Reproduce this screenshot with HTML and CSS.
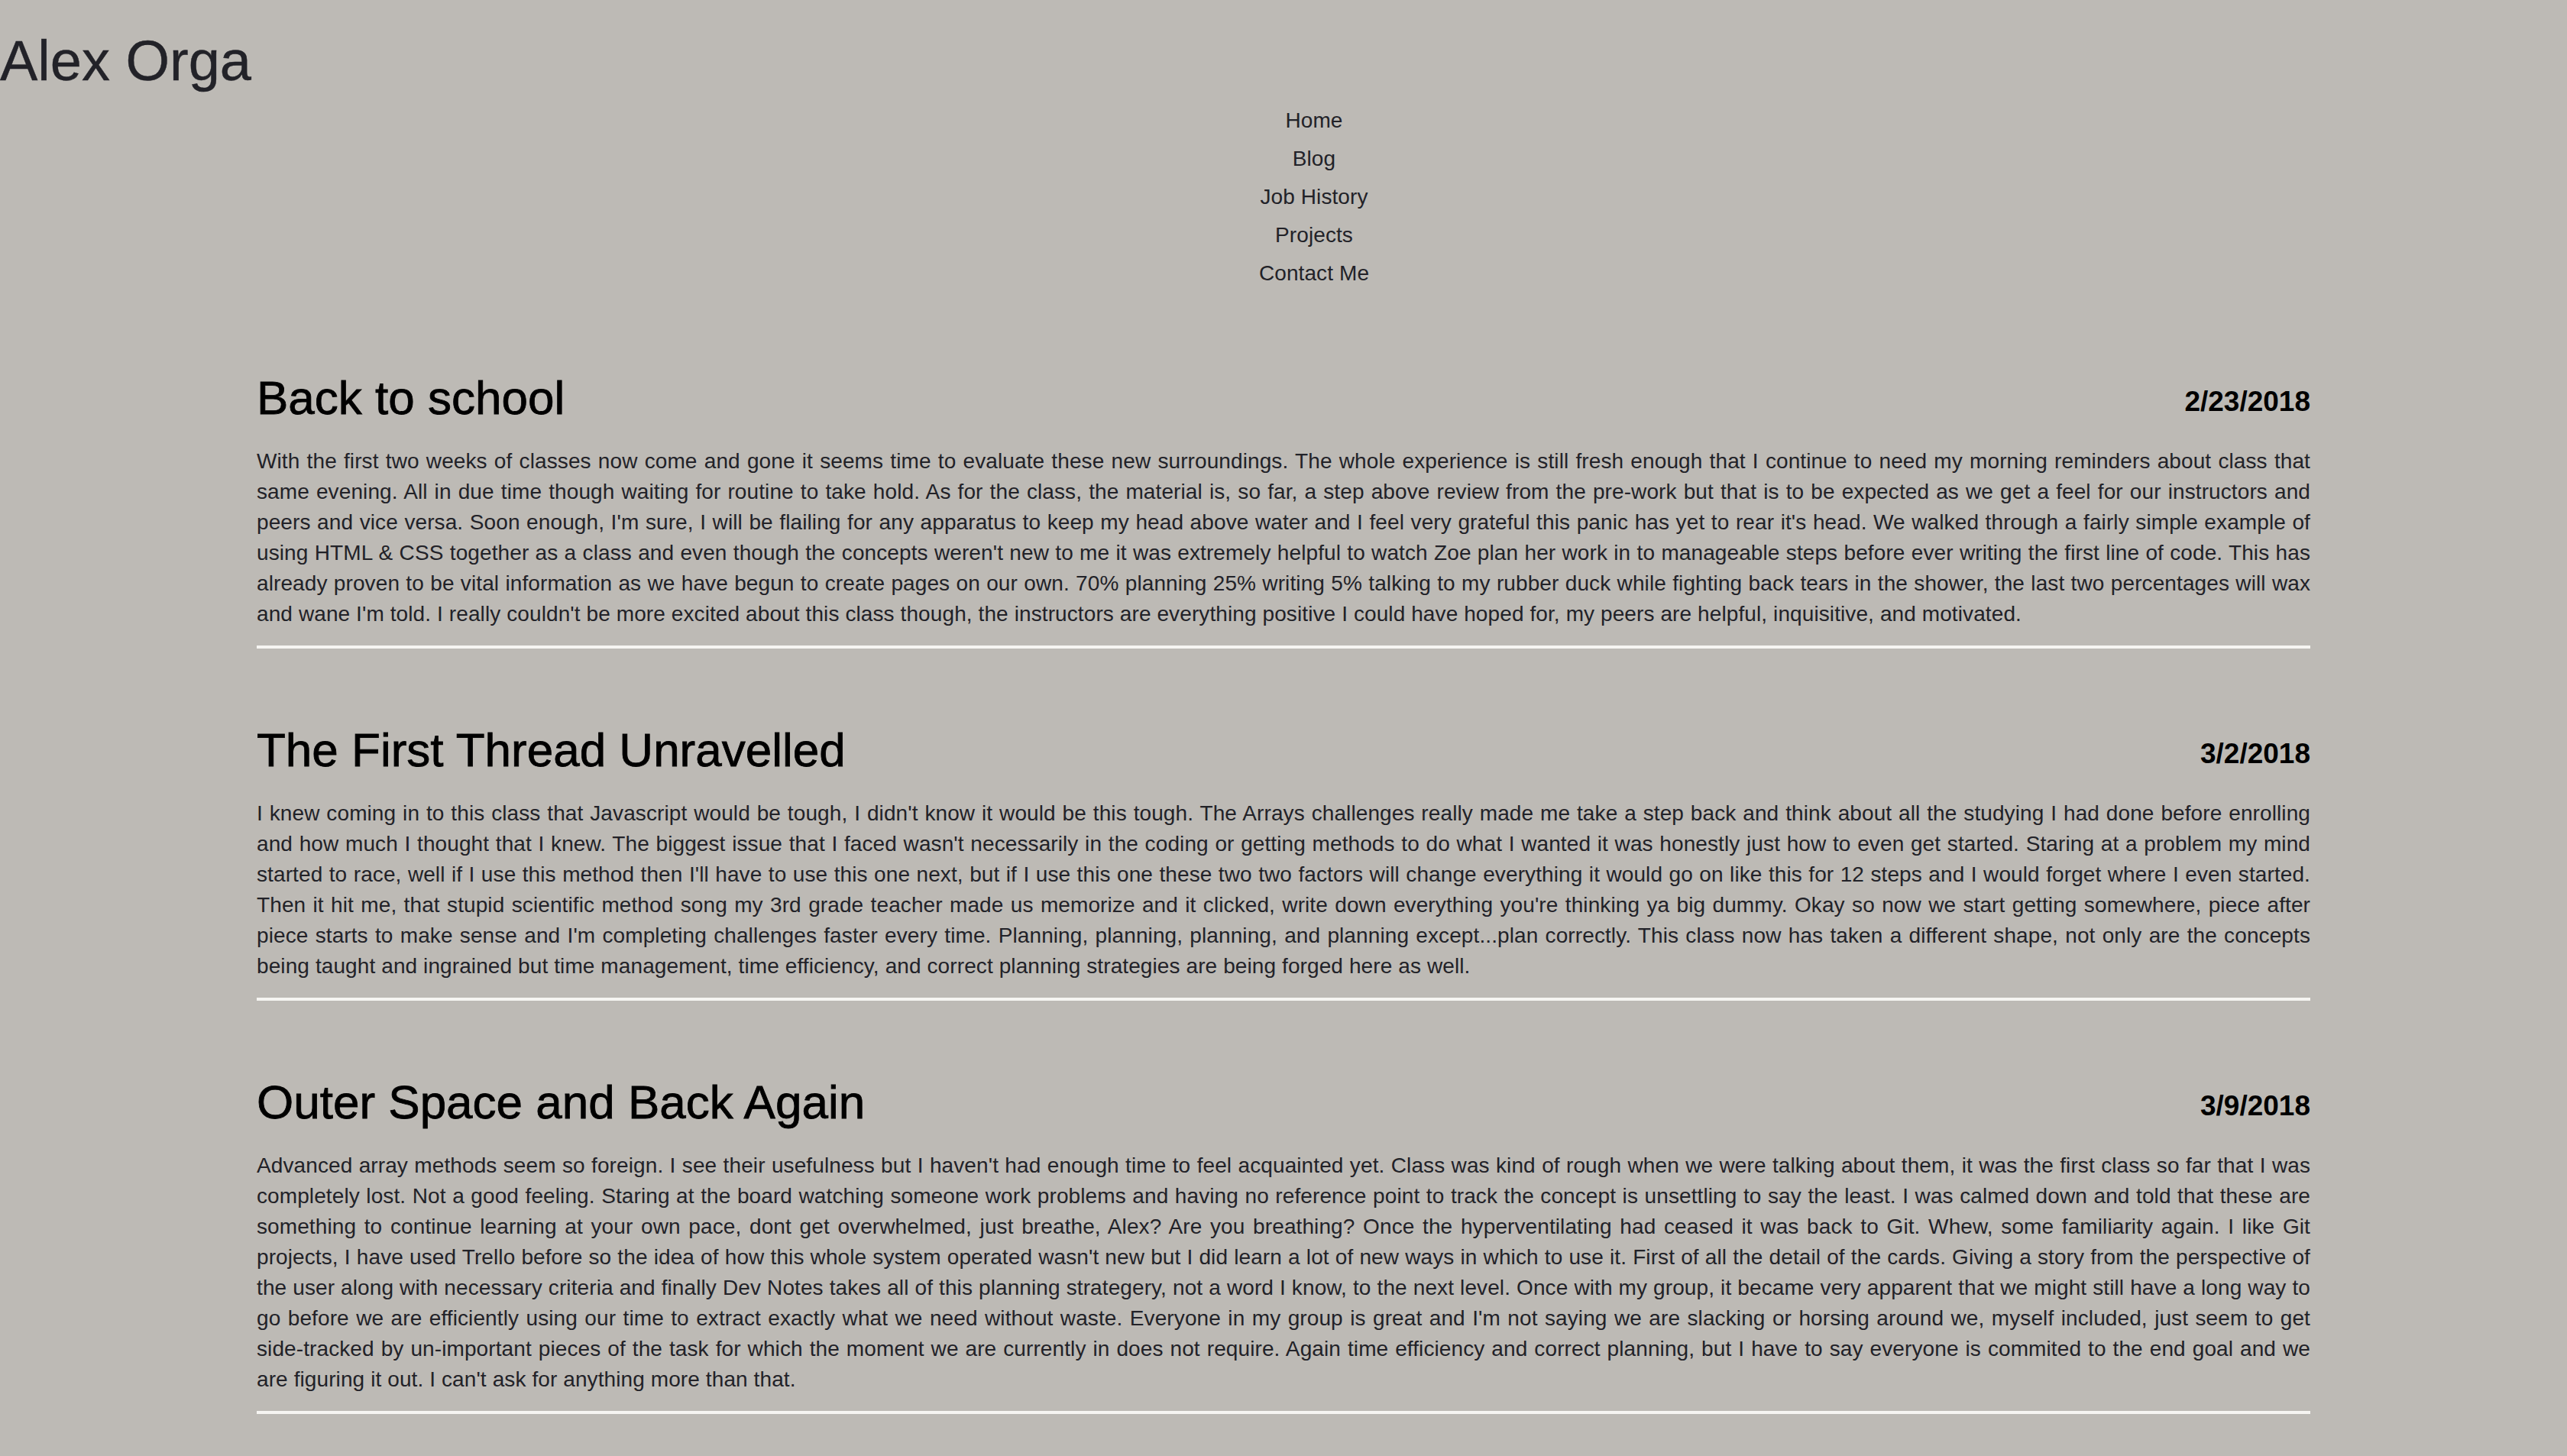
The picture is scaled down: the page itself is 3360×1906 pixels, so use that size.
FILE: index.html
```html
<!DOCTYPE html>
<html lang="en">
<head>
<meta charset="utf-8">
<title>Alex Orga</title>
<link rel="stylesheet" href="styles.css">
</head>
<body>
<header class="site-header">
  <h1 class="site-title">Alex Orga</h1>
  <nav class="site-nav">
    <ul class="nav-list">
      <li class="nav-item">Home</li>
      <li class="nav-item">Blog</li>
      <li class="nav-item">Job History</li>
      <li class="nav-item">Projects</li>
      <li class="nav-item">Contact Me</li>
    </ul>
  </nav>
</header>
<main class="posts">
  <article class="post">
    <div class="post-head">
      <h2 class="post-title">Back to school</h2>
      <h3 class="post-date">2/23/2018</h3>
    </div>
    <p class="post-body">With the first two weeks of classes now come and gone it seems time to evaluate these new surroundings. The whole experience is still fresh enough that I continue to need my morning reminders about class that same evening. All in due time though waiting for routine to take hold. As for the class, the material is, so far, a step above review from the pre-work but that is to be expected as we get a feel for our instructors and peers and vice versa. Soon enough, I'm sure, I will be flailing for any apparatus to keep my head above water and I feel very grateful this panic has yet to rear it's head. We walked through a fairly simple example of using HTML &amp; CSS together as a class and even though the concepts weren't new to me it was extremely helpful to watch Zoe plan her work in to manageable steps before ever writing the first line of code. This has already proven to be vital information as we have begun to create pages on our own. 70% planning 25% writing 5% talking to my rubber duck while fighting back tears in the shower, the last two percentages will wax and wane I'm told. I really couldn't be more excited about this class though, the instructors are everything positive I could have hoped for, my peers are helpful, inquisitive, and motivated.</p>
    <hr class="post-rule">
  </article>
  <article class="post">
    <div class="post-head">
      <h2 class="post-title">The First Thread Unravelled</h2>
      <h3 class="post-date">3/2/2018</h3>
    </div>
    <p class="post-body">I knew coming in to this class that Javascript would be tough, I didn't know it would be this tough. The Arrays challenges really made me take a step back and think about all the studying I had done before enrolling and how much I thought that I knew. The biggest issue that I faced wasn't necessarily in the coding or getting methods to do what I wanted it was honestly just how to even get started. Staring at a problem my mind started to race, well if I use this method then I'll have to use this one next, but if I use this one these two two factors will change everything it would go on like this for 12 steps and I would forget where I even started. Then it hit me, that stupid scientific method song my 3rd grade teacher made us memorize and it clicked, write down everything you're thinking ya big dummy. Okay so now we start getting somewhere, piece after piece starts to make sense and I'm completing challenges faster every time. Planning, planning, planning, and planning except...plan correctly. This class now has taken a different shape, not only are the concepts being taught and ingrained but time management, time efficiency, and correct planning strategies are being forged here as well.</p>
    <hr class="post-rule">
  </article>
  <article class="post">
    <div class="post-head">
      <h2 class="post-title">Outer Space and Back Again</h2>
      <h3 class="post-date">3/9/2018</h3>
    </div>
    <p class="post-body">Advanced array methods seem so foreign. I see their usefulness but I haven't had enough time to feel acquainted yet. Class was kind of rough when we were talking about them, it was the first class so far that I was completely lost. Not a good feeling. Staring at the board watching someone work problems and having no reference point to track the concept is unsettling to say the least. I was calmed down and told that these are something to continue learning at your own pace, dont get overwhelmed, just breathe, Alex? Are you breathing? Once the hyperventilating had ceased it was back to Git. Whew, some familiarity again. I like Git projects, I have used Trello before so the idea of how this whole system operated wasn't new but I did learn a lot of new ways in which to use it. First of all the detail of the cards. Giving a story from the perspective of the user along with necessary criteria and finally Dev Notes takes all of this planning strategery, not a word I know, to the next level. Once with my group, it became very apparent that we might still have a long way to go before we are efficiently using our time to extract exactly what we need without waste. Everyone in my group is great and I'm not saying we are slacking or horsing around we, myself included, just seem to get side-tracked by un-important pieces of the task for which the moment we are currently in does not require. Again time efficiency and correct planning, but I have to say everyone is commited to the end goal and we are figuring it out. I can't ask for anything more than that.</p>
    <hr class="post-rule">
  </article>
</main>
</body>
</html>
```

FILE: styles.css
```css
html, body {
  margin: 0;
  padding: 0;
}

body {
  background: #bdbab5;
  color: #222228;
  font-family: "Liberation Sans", Arial, Helvetica, sans-serif;
}

.site-title {
  margin: 43px 0 0 0;
  font-size: 74px;
  line-height: 74px;
  font-weight: normal;
  color: #222228;
  -webkit-text-stroke: 0.4px #222228;
}

.site-nav {
  margin-top: 16px;
}

.nav-list {
  list-style: none;
  margin: 0;
  padding: 0 0 0 80px;
  text-align: center;
  font-size: 28px;
  line-height: 50px;
  letter-spacing: 0.1px;
}

.posts {
  padding: 5px 10% 0 10%;
}

.post {
  margin-top: 102px;
}

.post-head {
  display: flex;
  justify-content: space-between;
  align-items: flex-end;
}

.post-title {
  margin: 0;
  font-size: 62px;
  line-height: 62px;
  font-weight: normal;
  color: #000;
  -webkit-text-stroke: 0.8px #000;
}

.post-date {
  margin: 0;
  font-size: 37px;
  line-height: 52px;
  font-weight: bold;
  color: #000;
}

.post-body {
  margin: 32px 0 21px 0;
  font-size: 28px;
  line-height: 40px;
  letter-spacing: 0.1px;
  text-align: justify;
}

.post-rule {
  margin: 0;
  border: 0;
  height: 4px;
  background: #f6f5f2;
}
```
